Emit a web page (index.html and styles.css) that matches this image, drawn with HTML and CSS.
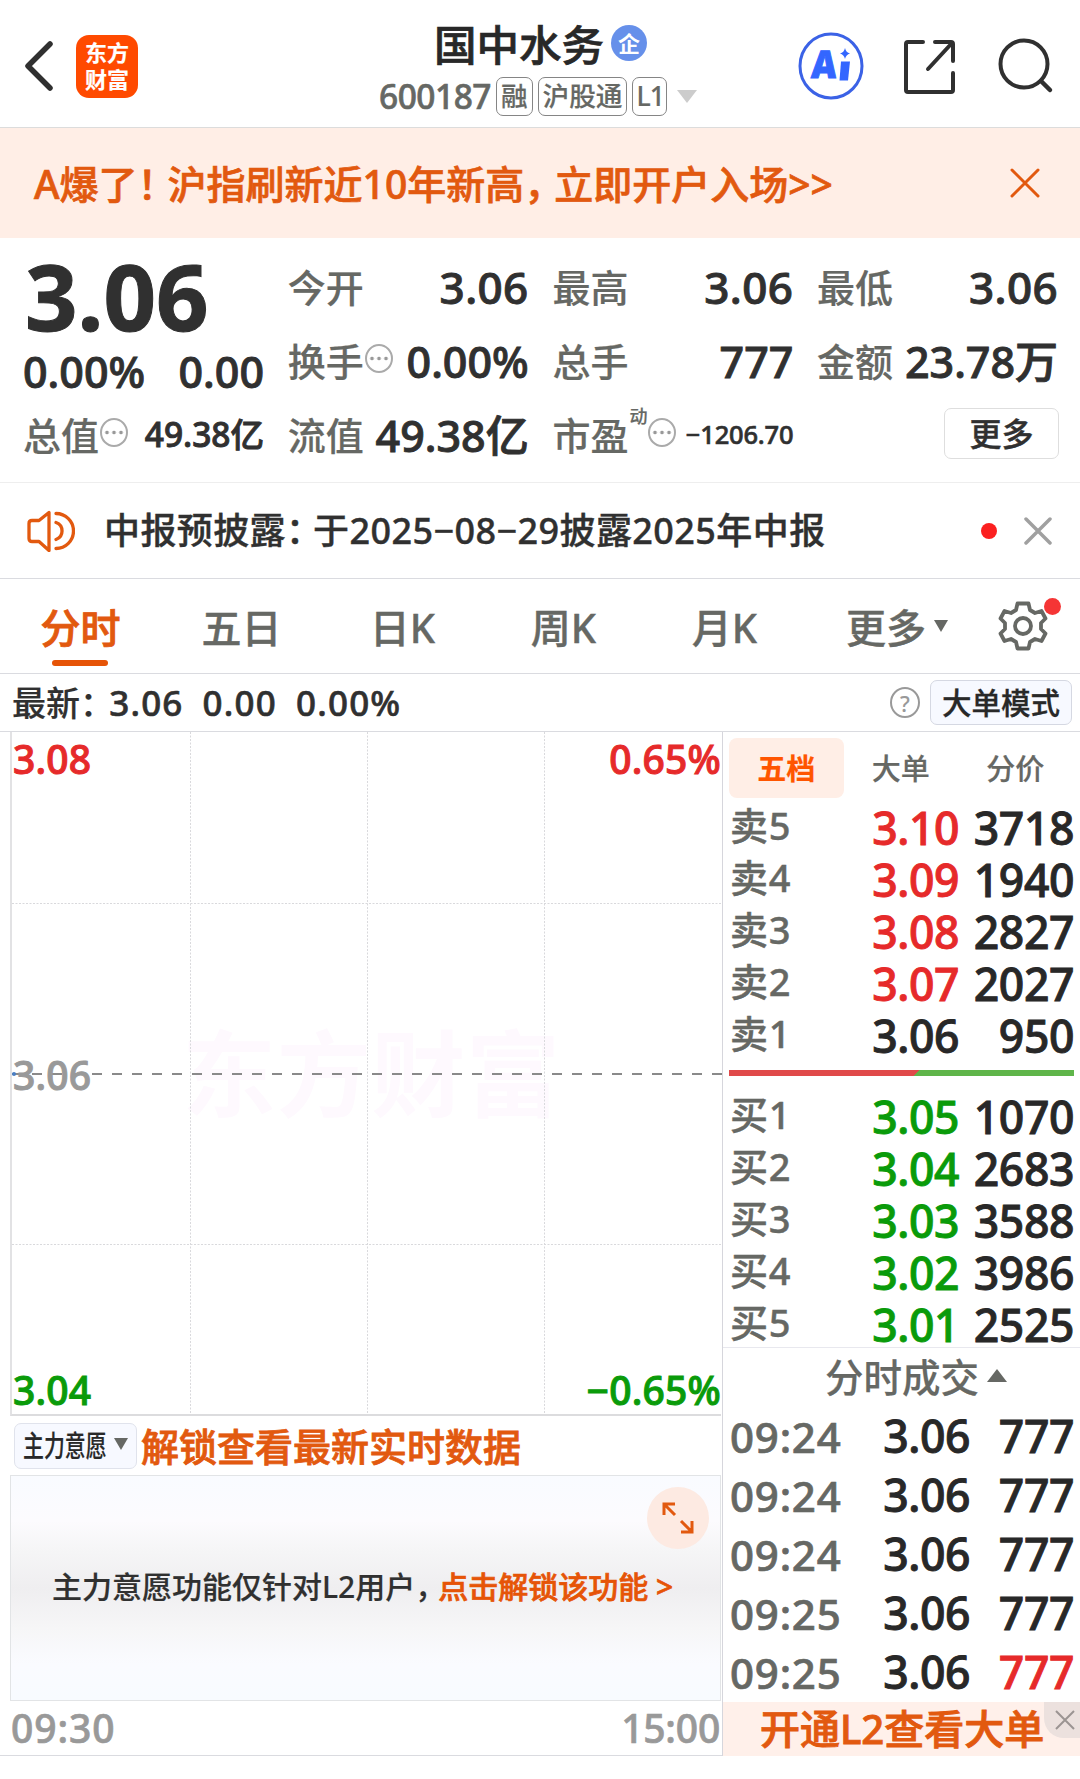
FILE: index.html
```html
<!DOCTYPE html>
<html lang="zh-CN">
<head>
  <meta charset="UTF-8">
  <meta name="viewport" content="width=device-width, initial-scale=1.0">
  <title>国中水务 600187</title>
  <link rel="stylesheet" href="styles.css">
</head>
<body>
<header class="header">
  <div class="header-left">
    <svg class="back" width="30" height="50" viewBox="0 0 30 50"><path d="M26 3 4 25l22 22" fill="none" stroke="#303030" stroke-width="5.500" stroke-linecap="round" stroke-linejoin="round"/></svg>
    <div class="logo"><span>东方</span><span>财富</span></div>
  </div>
  <div class="header-title">
    <div class="name">国中水务<span class="badge">企</span></div>
    <div class="code"><span class="num">600187</span><span class="tag">融</span><span class="tag">沪股通</span><span class="tag">L1</span><i class="tri-down"></i></div>
  </div>
  <div class="header-icons">
    <svg width="66" height="68" viewBox="0 0 66 68"><ellipse cx="33" cy="34" rx="31" ry="32" fill="none" stroke="#3b62e6" stroke-width="3"/><text x="16" y="46" class="ai-text" transform="skewX(-4)" textLength="25" lengthAdjust="spacingAndGlyphs">A</text><path d="M43 29.500h9l-2 19h-8.500z" fill="#3366ff"/><path d="M47 16q1 4.500 5 5.500-4 1-5 5.500-1-4.500-5-5.500 4-1 5-5.500z" fill="#3366ff"/></svg>
    <svg width="56" height="56" viewBox="0 0 56 56"><g fill="none" stroke="#303030" stroke-width="4" stroke-linecap="round" stroke-linejoin="round"><path d="M21 4H6q-2 0-2 2v46q0 2 2 2h43q2 0 2-2V35M33 4h16q2 0 2 2v17M50 5 26 31"/></g></svg>
    <svg width="56" height="56" viewBox="0 0 56 56"><circle cx="26" cy="26" r="23.500" fill="none" stroke="#303030" stroke-width="4"/><path d="m43 43 9 9" stroke="#303030" stroke-width="4.500" stroke-linecap="round"/></svg>
  </div>
</header>

<div class="banner">
  <div class="banner-text">A爆了<span class="pn">！</span>沪指刷新近10年新高<span class="pn">，</span>立即开户入场&gt;&gt;</div>
  <svg width="30" height="30" viewBox="0 0 30 30"><path d="m2 2 26 26M28 2 2 28" stroke="#e2590f" stroke-width="3" stroke-linecap="round"/></svg>
</div>

<section class="quote">
  <div class="quote-main">
    <div class="price">3.06</div>
    <div class="change"><span>0.00%</span><span>0.00</span></div>
  </div>
  <div class="cell"><label>今开</label><b>3.06</b></div>
  <div class="cell"><label>最高</label><b>3.06</b></div>
  <div class="cell"><label>最低</label><b>3.06</b></div>
  <div class="cell"><label>换手<i class="dots"></i></label><b class="tight">0.00%</b></div>
  <div class="cell"><label>总手</label><b class="tight">777</b></div>
  <div class="cell"><label>金额</label><b class="tight">23.78万</b></div>
  <div class="cell"><label>总值<i class="dots"></i></label><b class="mid">49.38亿</b></div>
  <div class="cell"><label>流值</label><b class="tight">49.38亿</b></div>
  <div class="cell"><label>市盈<sup>动</sup><i class="dots"></i></label><b class="small">−1206.70</b></div>
  <div class="cell cell-more"><button class="more">更多</button></div>
</section>

<div class="notice">
  <svg width="48" height="42" viewBox="0 0 48 42"><g fill="none" stroke="#e2590f" stroke-width="3.300" stroke-linejoin="round" stroke-linecap="round"><path d="M22 2.500v38L12 31.500H5q-3 0-3-3v-15q0-3 3-3h7z"/><path d="M29 12.500a9 9 0 0 1 0 17M29 3.500a17.500 17.500 0 0 1 0 35"/></g></svg>
  <div class="notice-text">中报预披露<span class="pn">：</span>于2025−08−29披露2025年中报</div>
  <i class="red-dot"></i>
  <svg width="28" height="28" viewBox="0 0 28 28"><path d="m2 2 24 24M26 2 2 26" stroke="#a0a0a0" stroke-width="3.500" stroke-linecap="round"/></svg>
</div>

<nav class="tabs">
  <a class="tab active">分时</a>
  <a class="tab">五日</a>
  <a class="tab">日K</a>
  <a class="tab">周K</a>
  <a class="tab">月K</a>
  <a class="tab tab-more">更多<i class="tri-small"></i></a>
  <a class="gear">
    <svg width="50" height="52" viewBox="-25 -26 50 52"><g fill="none" stroke="#666864" stroke-width="3.800" stroke-linejoin="round"><path d="M-5.500-22.500h11l1.500 6.500 5 3 6.500-2 4 7.500-4.500 4.500v6l4.500 4.500-4 7.500-6.500-2-5 3-1.500 6.500h-11l-1.500-6.500-5-3-6.500 2-4-7.500 4.500-4.500v-6l-4.500-4.500 4-7.500 6.500 2 5-3z"/><circle r="8"/></g></svg>
    <i class="red-dot"></i>
  </a>
</nav>

<div class="latest">
  <span>最新<span class="pn">：</span></span><span>3.06</span><span>0.00</span><span>0.00%</span>
  <i class="help">?</i>
  <button class="mode">大单模式</button>
</div>

<main class="main">
  <section class="left">
    <div class="chart">
      <svg class="grid" width="710" height="682" viewBox="0 0 710 682">
        <text class="watermark" x="170" y="378" textLength="378">东方财富</text>
        <g stroke="#d9d9dc" stroke-width="1" stroke-dasharray="2 1.500">
          <path d="M178.500 0v682M355.500 0v682M532.500 0v682M0 171.500h710M0 512.500h710"/>
        </g>
        <path d="M0 342h710" stroke="#8a8a8a" stroke-width="2" stroke-dasharray="10 10"/>
        <circle cx="2" cy="342" r="2" fill="#4a7fc4"/>
      </svg>
      <div class="axis red"><span>3.08</span><span>0.65%</span></div>
      <div class="axis axis-mid"><span>3.06</span></div>
      <div class="axis green"><span>3.04</span><span>−0.65%</span></div>
    </div>
    <div class="unlock">
      <button class="pick"><span>主力意愿</span><i class="tri-small"></i></button>
      <span class="unlock-text">解锁查看最新实时数据</span>
    </div>
    <div class="panel">
      <div class="panel-text">主力意愿功能仅针对L2用户<span class="pn">，</span><em>点击解锁该功能 &gt;</em></div>
      <div class="expand"><svg width="34" height="34" viewBox="0 0 34 34"><path d="M3 14V3h11M4 4l10 10M31 20v11H20M30 30 20 20" fill="none" stroke="#e2590f" stroke-width="3"/></svg></div>
    </div>
    <div class="times"><span>09:30</span><span>15:00</span></div>
  </section>

  <aside class="right">
    <div class="book-tabs"><a class="active">五档</a><a>大单</a><a>分价</a></div>
    <div class="book">
      <div class="row"><label>卖5</label><b class="red">3.10</b><b>3718</b></div>
      <div class="row"><label>卖4</label><b class="red">3.09</b><b>1940</b></div>
      <div class="row"><label>卖3</label><b class="red">3.08</b><b>2827</b></div>
      <div class="row"><label>卖2</label><b class="red">3.07</b><b>2027</b></div>
      <div class="row"><label>卖1</label><b>3.06</b><b>950</b></div>
    </div>
    <div class="ratio"></div>
    <div class="book buy">
      <div class="row"><label>买1</label><b class="green">3.05</b><b>1070</b></div>
      <div class="row"><label>买2</label><b class="green">3.04</b><b>2683</b></div>
      <div class="row"><label>买3</label><b class="green">3.03</b><b>3588</b></div>
      <div class="row"><label>买4</label><b class="green">3.02</b><b>3986</b></div>
      <div class="row"><label>买5</label><b class="green">3.01</b><b>2525</b></div>
    </div>
    <div class="deals-title">分时成交<i class="tri-up"></i></div>
    <div class="deals">
      <div class="row"><label>09:24</label><b>3.06</b><b>777</b></div>
      <div class="row"><label>09:24</label><b>3.06</b><b>777</b></div>
      <div class="row"><label>09:24</label><b>3.06</b><b>777</b></div>
      <div class="row"><label>09:25</label><b>3.06</b><b>777</b></div>
      <div class="row"><label>09:25</label><b>3.06</b><b class="red">777</b></div>
    </div>
    <div class="promo">开通L2查看大单
      <span class="promo-close"><svg width="22" height="22" viewBox="0 0 22 22"><path d="m2 2 18 18M20 2 2 20" stroke="#9b9492" stroke-width="2"/></svg></span>
    </div>
  </aside>
</main>
</body>
</html>
```

FILE: styles.css
```css
* { box-sizing: border-box; }
body {
  margin: 0;
  width: 1080px;
  height: 1779px;
  overflow: hidden;
  background: #fff;
  color: #303030;
  font-family: "Noto Sans", "Noto Sans CJK SC", sans-serif;
  font-weight: 500;
  line-height: 1;
  white-space: nowrap;
  -webkit-text-stroke: 0.2px;
}
i, em { font-style: normal; }
b { font-weight: 500; -webkit-text-stroke: 0.9px; }
svg { display: block; flex: none; }
button { font: inherit; color: inherit; padding: 0; display: flex; align-items: center; justify-content: center; }
.pn { letter-spacing: -0.23em; }
.red { color: #e62a2a; }
.green { color: #0a9b0a; }

/* header */
.header { display: grid; grid-template-columns: 379px 1fr 290px; height: 128px; border-bottom: 1px solid #dcdcdc; }
.header-left { display: flex; align-items: center; padding: 5px 0 0 24px; gap: 22px; }
.logo { width: 62px; height: 63px; border-radius: 13px; background: #ff4a00; color: #fff; font-size: 22px; font-weight: 700; display: flex; flex-direction: column; align-items: center; justify-content: center; gap: 5px; padding-bottom: 2px; }
.header-title { padding-top: 22px; }
.name { display: flex; align-items: center; height: 46px; padding-left: 55px; font-size: 42.5px; color: #282828; -webkit-text-stroke: 0.7px; }
.badge { width: 36px; height: 36px; margin: -4px 0 0 7px; border-radius: 50%; background: #6690ea; color: #fff; font-size: 22px; font-weight: 700; -webkit-text-stroke: 0; display: flex; align-items: center; justify-content: center; }
.code { display: flex; align-items: center; gap: 5px; margin-top: 9px; height: 39px; color: #666864; font-size: 33.5px; }
.code .num { width: 112px; letter-spacing: -0.5px; -webkit-text-stroke: 0.6px; }
.tag { height: 39px; padding: 0 4px; border: 1px solid #858585; border-radius: 7px; font-size: 26.6px; display: flex; align-items: center; }
.tag:nth-child(4) { width: 35px; padding: 0 3px; letter-spacing: -0.8px; }
.tri-down { margin-left: 5px; border: 10px solid transparent; border-top: 13px solid #ccc; border-bottom: 0; }
.header-icons { display: flex; align-items: center; padding: 5px 0 0 8px; gap: 38px; }
.header-icons svg:last-child { margin-left: 2px; }
.ai-text { font-size: 38px; font-weight: 900; fill: #3366ff; stroke: #3366ff; stroke-width: 1; }

/* open account banner */
.banner { display: flex; align-items: center; justify-content: space-between; height: 110px; padding: 0 40px 0 34px; background: #ffeee6; color: #e2590f; }
.banner-text { font-size: 39px; margin-top: 1px; -webkit-text-stroke: 0.7px; }

/* quote */
.quote { display: grid; grid-template-columns: repeat(4, 240px); grid-template-rows: repeat(3, 74px); column-gap: 24.7px; height: 245px; padding: 12px 0 0 23px; border-bottom: 1px solid #eee; }
.quote-main { grid-row: span 2; }
.price { height: 95px; line-height: 92px; padding-left: 2px; font-size: 92px; font-weight: 700; -webkit-text-stroke: 1px; }
.change { display: flex; justify-content: space-between; align-items: center; height: 53px; font-size: 43px; -webkit-text-stroke: 0.9px; }
.change span + span { margin-right: -1px; }
.cell { display: flex; justify-content: space-between; align-items: center; font-size: 44px; }
.cell b { letter-spacing: 0.4px; margin-right: -1px; }
.cell label { display: flex; align-items: center; font-size: 38px; color: #666864; }
.cell .mid { font-size: 33.5px; letter-spacing: 0; }
.cell .tight { font-size: 43px; letter-spacing: 0; }
.cell .small { font-size: 25.5px; letter-spacing: -0.2px; -webkit-text-stroke: 0.6px; }
.cell sup { font-size: 18px; align-self: flex-start; margin: -9px 0 0 1px; }
.dots { width: 28px; height: 29px; margin: -5px 0 0 1px; border: 2px solid #aaa; border-radius: 50%; background: radial-gradient(circle, #999 1.5px, transparent 2.2px) center / 7px 100% repeat-x; background-clip: content-box; padding: 0 1px; }
.cell-more { justify-content: flex-end; }
.more { width: 115px; height: 51px; margin: -3px -2px 0 0; border: 1px solid #dedede; border-radius: 7px; background: #fff; font-size: 32px; -webkit-text-stroke: 0.4px; }

/* notice */
.notice { display: flex; align-items: center; height: 96px; padding: 0 28px 0 27px; border-bottom: 1px solid #dadbe0; }
.notice-text { flex: 1; padding-left: 29px; font-size: 36px; letter-spacing: 0.4px; -webkit-text-stroke: 0.4px; }
.notice-text .pn { letter-spacing: -0.25em; }
.red-dot { width: 16px; height: 16px; border-radius: 50%; background: #fb2020; }
.notice .red-dot { margin-right: 27px; }

/* period tabs */
.tabs { display: flex; align-items: center; height: 95px; border-bottom: 1px solid #dadbe0; font-size: 40px; color: #666864; -webkit-text-stroke: 0.4px; }
.tab { position: relative; width: 161px; height: 94px; display: flex; align-items: center; justify-content: center; padding-top: 3px; }
.tab-more { width: 184px; }
.tab.active { color: #e2590f; -webkit-text-stroke: 0.9px; }
.tab.active::after { content: ""; position: absolute; left: 52px; bottom: 7px; width: 56px; height: 6px; border-radius: 3px; background: #e65407; }
.tri-small { margin: -4px 0 0 8px; border: 7px solid transparent; border-top: 12px solid #666864; border-bottom: 0; }
.gear { position: relative; margin-left: auto; margin-right: 32px; }
.gear .red-dot { position: absolute; right: -13px; top: -2px; width: 17px; height: 17px; background: #f53535; }

/* latest price line */
.latest { display: flex; align-items: center; height: 58px; padding: 0 8px 0 12px; border-bottom: 1px solid #dadbe0; font-size: 35px; letter-spacing: 1.2px; -webkit-text-stroke: 0.6px; }
.latest > span { margin-right: 19px; }
.latest > span:first-child { margin-right: 3px; font-size: 34px; letter-spacing: 0; -webkit-text-stroke: 0.2px; }
.help { width: 30px; height: 31px; margin-left: auto; margin-right: 10px; border: 2px solid #999; border-radius: 50%; color: #999; font-size: 22px; letter-spacing: 0; -webkit-text-stroke: 0; display: flex; align-items: center; justify-content: center; }
.mode { width: 142px; height: 45px; border: 1px solid #d5d8e2; border-radius: 7px; background: #f7f9ff; font-size: 29.5px; letter-spacing: 0; color: #282828; -webkit-text-stroke: 0.3px; }

/* chart side */
.main { display: grid; grid-template-columns: 722px 358px; height: 1024px; border-bottom: 1px solid #dadbe0; }
.left { padding-left: 10px; }
.chart { position: relative; width: 711px; height: 684px; border-left: 2px solid #e2e2e4; border-bottom: 2px solid #dcdcde; display: flex; flex-direction: column; justify-content: space-between; }
.grid { position: absolute; left: 0; top: 0; }
.watermark { font-size: 94px; font-weight: 700; fill: #fef9fe; -webkit-text-stroke: 0; }
.axis { position: relative; display: flex; justify-content: space-between; height: 52px; align-items: center; padding: 0 0 0 1px; font-size: 39px; letter-spacing: 0.2px; -webkit-text-stroke: 1px; }
.axis-mid { color: #999; padding-top: 3px; }
.axis.green { padding-top: 3px; }
.unlock { display: flex; align-items: center; height: 59px; padding-left: 4px; gap: 4px; }
.pick { width: 123px; height: 46px; border: 1px solid #e0e3ec; border-radius: 7px; background: #f7f9ff; font-size: 29px; color: #282828; }
.pick span { width: 84px; transform: scaleX(0.72); transform-origin: 0 50%; }
.pick .tri-small { margin: -4px 0 0 7px; }
.unlock-text { font-size: 38px; color: #e2590f; -webkit-text-stroke: 0.8px; }
.panel { position: relative; width: 711px; height: 226px; border: 1px solid #e2e4e6; display: flex; align-items: center; padding-left: 41px; background: linear-gradient(#f9fbff, #fcfbfe 20%, #f6f6f7 32%, #efeef0 50%, #f6f6f7 68%, #fafbff 84%, #f8fbff); }
.panel-text { font-size: 30px; margin-top: -2px; }
.panel-text em { color: #e65407; letter-spacing: 0; -webkit-text-stroke: 0.7px; }
.expand { position: absolute; right: 11px; top: 11px; width: 62px; height: 62px; border-radius: 50%; background: #fdeae2; display: flex; align-items: center; justify-content: center; }
.times { display: flex; align-items: center; justify-content: space-between; height: 52px; padding: 0 2px 0 1px; font-size: 39px; letter-spacing: -0.2px; color: #999; -webkit-text-stroke: 0.7px; }
.times span:first-child { letter-spacing: 0.9px; }

/* order book side */
.right { border-left: 1px solid #d6d6dc; }
.book-tabs { display: flex; padding: 6px 0 0 6px; height: 70px; font-size: 29px; color: #666864; }
.book-tabs a { width: 114.5px; height: 60px; display: flex; align-items: center; justify-content: center; }
.book-tabs .active { border-radius: 8px; background: #ffeee6; color: #ff5500; font-weight: 700; }
.row { display: grid; grid-template-columns: 1fr 110px 115px; align-items: center; height: 52px; padding: 0 6px 0 7px; color: #282828; font-size: 44.5px; text-align: right; letter-spacing: -0.4px; }
.row label { text-align: left; font-size: 38px; letter-spacing: 0.8px; color: #666864; padding-bottom: 7px; -webkit-text-stroke: 0.4px; }
.row .red { color: #e62a2a; }
.row .green { color: #0a9b0a; }
.ratio { height: 6px; margin: 8px 6px 15px; background: linear-gradient(135deg, #e04a4a 135px, #5fb54a 135px); }
.book.buy { height: 256px; }
.deals-title { display: flex; align-items: center; justify-content: center; height: 60px; padding-left: 29px; border-top: 1px solid #e8e8ee; font-size: 38.5px; color: #666864; }
.tri-up { margin: -4px 0 0 8px; border: 10px solid transparent; border-bottom: 13px solid #666864; border-top: 0; }
.deals .row { height: 59px; grid-template-columns: 1fr 110px 104px; }
.deals .row label { font-size: 42px; letter-spacing: 0.8px; padding-bottom: 0; -webkit-text-stroke: 0.7px; }
.promo { position: relative; height: 54px; display: flex; align-items: center; padding-left: 37px; background: #fff0ea; color: #e2590f; font-size: 40px; -webkit-text-stroke: 0.9px; }
.promo-close { position: absolute; right: 0; top: 0; width: 36px; height: 36px; border-bottom-left-radius: 20px; background: #ece1de; display: flex; align-items: center; justify-content: center; padding-left: 5px; }
```
